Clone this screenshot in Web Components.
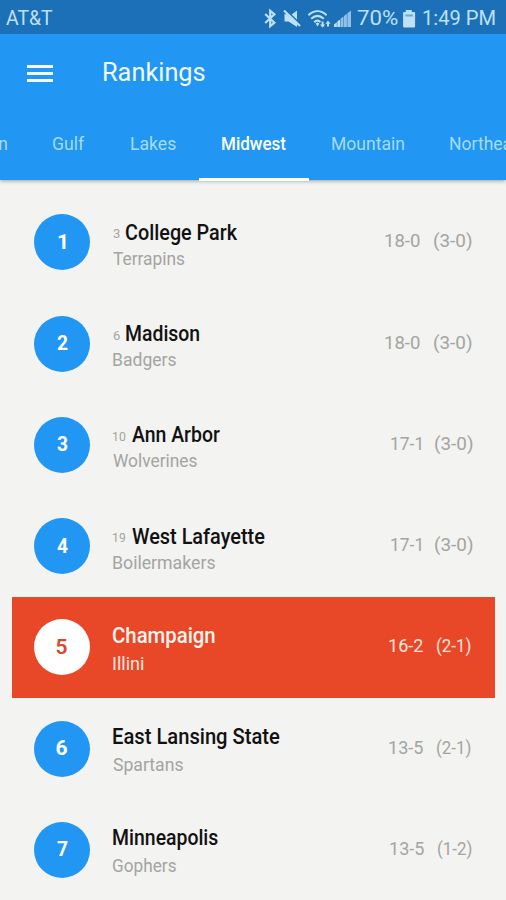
<!DOCTYPE html>
<html lang="en">
<head>
<meta charset="utf-8">
<title>Rankings</title>
<style>
  html, body {
    margin: 0;
    height: 900px;
    overflow: hidden;
    background: #f3f3f1;
    font-family: Roboto, "Liberation Sans", sans-serif;
  }
</style>
</head>
<body>
<rankings-app></rankings-app>

<script>
// Text condensed or expanded to an exact width
class FitText extends HTMLElement {
  constructor() {
    super();
    this.attachShadow({mode: 'open'}).innerHTML = `
      <style>
        :host { display: block; flex: none; white-space: nowrap; }
        span { display: inline-block; transform-origin: 0 50%; }
      </style>
      <span><slot></slot></span>
    `;
  }

  connectedCallback() {
    const width = Number(this.getAttribute('width'));
    const style = getComputedStyle(this);
    const context = document.createElement('canvas').getContext('2d');
    context.font = `${style.fontWeight} ${style.fontSize} ${style.fontFamily}`;
    const box = context.measureText(this.textContent);
    const scale = width / (box.actualBoundingBoxLeft + box.actualBoundingBoxRight);
    this.style.width = `${width}px`;
    this.shadowRoot.querySelector('span').style.transform =
      `translateX(${box.actualBoundingBoxLeft * scale}px) scaleX(${scale})`;
  }
}

class StatusBar extends HTMLElement {
  constructor() {
    super();
    this.attachShadow({mode: 'open'}).innerHTML = `
      <style>
        :host {
          display: flex;
          align-items: center;
          height: 34px;
          box-sizing: border-box;
          padding: 3px 11px 0 6px;
          background: #1b70b7;
          color: #bfe0fa;
          font-size: 19.5px;
          line-height: 30px;
        }
        .carrier { margin-right: auto; }
        svg { display: block; flex: none; fill: currentColor; padding-bottom: 2px; }
        .time { margin-left: 7px; }
      </style>
      <fit-text class="carrier" width="47">AT&amp;T</fit-text>
      <svg width="94" height="22" viewBox="262 6 94 22">
        <path d="M264.200 13l9.200 8.800-4.200 3.400V9.800l4.200 3.400-9.200 8.800" fill="none" stroke="currentColor" stroke-width="2.200"/>
        <path d="M283.500 13v7.500h4l8.500 5.500V9.500l-6 4.500z"/>
        <path d="M283.700 7.800L300 23.800" stroke="#1b70b7" stroke-width="1.800"/>
        <path d="M283 9.500L299 25" stroke="currentColor" stroke-width="2.200"/>
        <g fill="none" stroke="currentColor" stroke-width="2">
          <path d="M307.400 14.200c5.700-5.200 12.600-5.200 18.200 0"/>
          <path d="M310.200 17.800c4-3.700 8.600-3.700 12.600 0"/>
          <path d="M313.200 21.200c1.900-1.900 4.400-1.900 6.300-.2"/>
        </g>
        <path d="M314.600 22.600l1.900-1 1.900 1-1.900 2.800z"/>
        <path d="M320.600 20.500h2v3h1.600l-2.600 3.200-2.600-3.200h1.600zM326 25.500v-2.700h-1.600l2.600-3.400 2.600 3.400H328v2.700z"/>
        <path d="M333 26v-2.500l2.800-2.300V26zM336.300 26v-5.400l2.800-2.200V26z"/>
        <path d="M339.600 26v-8.200l2.900-2.200V26zM343 26V15l2.900-2.200V26zM346.400 26V12.200l3.600-2.700V26z" opacity=".72"/>
      </svg>
      <fit-text width="41">70%</fit-text>
      <svg width="18" height="22" viewBox="398 6 18 22">
        <path d="M405.800 9h6v2h2.300q1 0 1 1v13.500q0 1-1 1h-10q-1 0-1-1V12q0-1 1-1h1.700z"/>
        <path d="M405.300 13.500h7.600v2h-7.600z" fill="#6ba7d8"/>
      </svg>
      <fit-text class="time" width="72">1:49 PM</fit-text>
    `;
  }
}

class AppBar extends HTMLElement {
  constructor() {
    super();
    this.attachShadow({mode: 'open'}).innerHTML = `
      <style>
        :host {
          display: flex;
          align-items: center;
          height: 76px;
          padding-left: 27px;
          gap: 50.5px;
          color: #eefaff;
          font-size: 25.5px;
          line-height: 32px;
        }
        .menu { display: grid; gap: 4px; width: 26px; padding-top: 3px; }
        .menu i { height: 3px; background: #f4fbff; }
      </style>
      <div class="menu"><i></i><i></i><i></i></div>
      <fit-text width="100.5">Rankings</fit-text>
    `;
  }
}

class TabItem extends HTMLElement {
  constructor() {
    super();
    this.attachShadow({mode: 'open'}).innerHTML = `
      <style>
        :host {
          display: flex;
          flex: none;
          box-sizing: border-box;
          height: 71px;
          padding: 22px 23px 0;
          color: #a6dbfb;
          font-size: 18px;
          line-height: 24px;
        }
        :host([selected]) {
          color: #fff;
          font-weight: 500;
          border-bottom: 3px solid #fff;
        }
      </style>
      <slot></slot>
    `;
  }
}

class TabBar extends HTMLElement {
  constructor() {
    super();
    this.attachShadow({mode: 'open'}).innerHTML = `
      <style>
        :host {
          display: flex;
          height: 70px;
          overflow: visible;
        }
        ::slotted(:first-child) { margin-left: -73px; }
      </style>
      <slot></slot>
    `;
  }
}

class RankingRow extends HTMLElement {
  constructor() {
    super();
    this.attachShadow({mode: 'open'});
  }

  connectedCallback() {
    const {place, rank, rankWidth, name, nameWidth, team, teamWidth,
      record, recordWidth, conference, conferenceWidth, right, selected} = this.data;
    this.toggleAttribute('selected', Boolean(selected));
    this.shadowRoot.innerHTML = `
      <style>
        :host {
          display: flex;
          align-items: center;
          flex: none;
          box-sizing: border-box;
          height: 101.25px;
          margin: 0 11px 0 12px;
          padding-left: 22px;
          color: #a4a4a2;
          font-size: 18.5px;
        }
        :host([selected]) { background: #e84828; color: #ffe6dc; }
        .place {
          display: grid;
          place-items: center;
          width: 56px;
          height: 56px;
          margin-right: 23px;
          border-radius: 50%;
          background: #2196f3;
          color: #fff;
          font-size: 21px;
          font-weight: 700;
          line-height: 56px;
        }
        .place fit-text { margin-top: -1px; }
        :host([selected]) .place { background: #fff; color: #d84830; font-weight: 600; }
        .team { margin-right: auto; padding-top: 5px; }
        .title {
          display: flex;
          align-items: baseline;
          gap: 6px;
          height: 28px;
          color: #111;
          font-size: 22px;
          font-weight: 500;
          line-height: 26px;
        }
        .title.ranked { padding-top: 2px; height: 26px; }
        :host([selected]) .title { color: #fff4ee; }
        .rank {
          position: relative;
          top: -1.5px;
          color: #a4a4a2;
          font-size: 13px;
          font-weight: 400;
        }
        .nick { line-height: 26px; }
        .record { display: flex; gap: 14px; line-height: 26px; margin-top: -2px; }
      </style>
      <div class="place"><fit-text width="${place === 1 ? 8 : 11}">${place}</fit-text></div>
      <div class="team">
        <div class="title ${rank ? 'ranked' : ''}">
          ${rank ? `<fit-text class="rank" width="${rankWidth}">${rank}</fit-text>` : ''}
          <fit-text width="${nameWidth}">${name}</fit-text>
        </div>
        <fit-text class="nick" width="${teamWidth}">${team}</fit-text>
      </div>
      <div class="record" style="margin-right: ${right}px">
        <fit-text width="${recordWidth}">${record}</fit-text>
        <fit-text width="${conferenceWidth}">(${conference})</fit-text>
      </div>
    `;
  }
}

const rows = [
  {place: 1, rank: 3, rankWidth: 7, name: 'College Park', nameWidth: 111.5, team: 'Terrapins', teamWidth: 71.5, record: '18-0', recordWidth: 35, conference: '3-0', conferenceWidth: 38, right: 23},
  {place: 2, rank: 6, rankWidth: 7, name: 'Madison', nameWidth: 73, team: 'Badgers', teamWidth: 63, record: '18-0', recordWidth: 35, conference: '3-0', conferenceWidth: 38, right: 23},
  {place: 3, rank: 10, rankWidth: 12.5, name: 'Ann Arbor', nameWidth: 88, team: 'Wolverines', teamWidth: 84, record: '17-1', recordWidth: 30, conference: '3-0', conferenceWidth: 38, right: 22.5},
  {place: 4, rank: 19, rankWidth: 12.5, name: 'West Lafayette', nameWidth: 133, team: 'Boilermakers', teamWidth: 102, record: '17-1', recordWidth: 30, conference: '3-0', conferenceWidth: 38, right: 22.5},
  {place: 5, name: 'Champaign', nameWidth: 101.5, team: 'Illini', teamWidth: 31, record: '16-2', recordWidth: 34, conference: '2-1', conferenceWidth: 34, right: 24, selected: true},
  {place: 6, name: 'East Lansing State', nameWidth: 167, team: 'Spartans', teamWidth: 70, record: '13-5', recordWidth: 34, conference: '2-1', conferenceWidth: 34, right: 24},
  {place: 7, name: 'Minneapolis', nameWidth: 105, team: 'Gophers', teamWidth: 63, record: '13-5', recordWidth: 34, conference: '1-2', conferenceWidth: 34, right: 23},
];

class RankingList extends HTMLElement {
  constructor() {
    super();
    this.attachShadow({mode: 'open'}).innerHTML = `
      <style>
        :host {
          display: flex;
          flex-direction: column;
          padding-top: 11.75px;
        }
      </style>
    `;
    for (const data of rows) {
      const row = document.createElement('ranking-row');
      row.data = data;
      this.shadowRoot.appendChild(row);
    }
  }
}

class RankingsApp extends HTMLElement {
  constructor() {
    super();
    this.attachShadow({mode: 'open'}).innerHTML = `
      <style>
        :host { display: block; width: 506px; height: 900px; overflow: hidden; }
        header { background: #2196f3; box-shadow: 0 1px 4px rgba(0, 0, 0, .35); }
      </style>
      <header>
        <status-bar></status-bar>
        <app-bar></app-bar>
        <tab-bar>
          <tab-item><fit-text width="57">Eastern</fit-text></tab-item>
          <tab-item><fit-text width="32">Gulf</fit-text></tab-item>
          <tab-item><fit-text width="45">Lakes</fit-text></tab-item>
          <tab-item selected><fit-text width="64">Midwest</fit-text></tab-item>
          <tab-item><fit-text width="72">Mountain</fit-text></tab-item>
          <tab-item><fit-text width="77">Northeast</fit-text></tab-item>
        </tab-bar>
      </header>
      <ranking-list></ranking-list>
    `;
  }
}

customElements.define('fit-text', FitText);
customElements.define('status-bar', StatusBar);
customElements.define('app-bar', AppBar);
customElements.define('tab-item', TabItem);
customElements.define('tab-bar', TabBar);
customElements.define('ranking-row', RankingRow);
customElements.define('ranking-list', RankingList);
customElements.define('rankings-app', RankingsApp);
</script>
</body>
</html>
